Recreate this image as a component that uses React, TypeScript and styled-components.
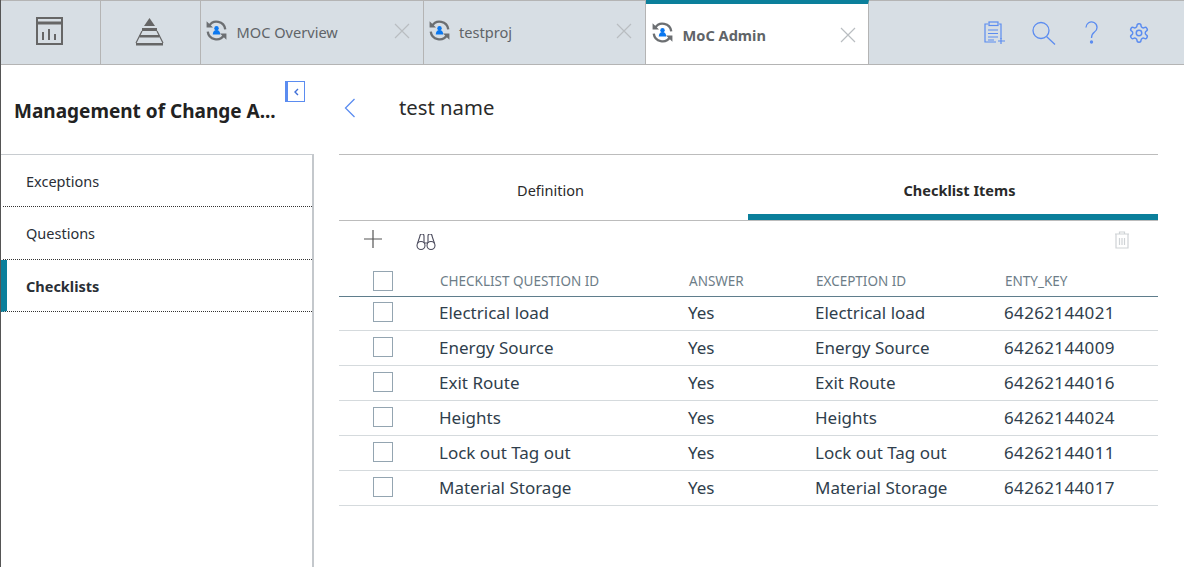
import { createGlobalStyle, styled } from 'styled-components'

const GlobalStyle = createGlobalStyle`
  html, body {
    margin: 0;
    padding: 0;
    background: #fff;
    font-family: "Noto Sans", "Open Sans", sans-serif;
  }
`

const Page = styled.div`
  width: 1184px;
  height: 567px;
  overflow: hidden;
  display: flex;
  flex-direction: column;
  box-sizing: border-box;
  border-left: 1px solid #555;
`

const TabBar = styled.div`
  height: 65px;
  flex: none;
  display: flex;
  box-sizing: border-box;
  border-top: 1px solid #b4b4b4;
  border-bottom: 1px solid #b4b4b4;
  background: #d7dee4;
`

const IconTab = styled.div<{ $shift: number }>`
  width: 100px;
  flex: none;
  display: flex;
  align-items: center;
  justify-content: center;
  box-sizing: border-box;
  border-right: 1px solid #b4b4b4;
  padding: 0 ${p => p.$shift}px 3px 0;
`

const Tab = styled.div<{ $active?: boolean }>`
  width: ${p => (p.$active ? '223px' : '222.5px')};
  flex: none;
  display: flex;
  align-items: center;
  box-sizing: border-box;
  padding: ${p => (p.$active ? '1px 12px 0 6px' : '0 13px 3px 5px')};
  border-right: 1px solid #b4b4b4;
  color: #606468;
  font-size: 14.6px;
  font-weight: ${p => (p.$active ? 700 : 400)};
  ${p =>
    p.$active &&
    `
    background: #fff;
    height: 64px;
    margin-bottom: -1px;
    border-top: 4px solid #0b7f9b;
    margin-top: -1px;
  `}
`

const TabIcon = styled.span<{ $active?: boolean }>`
  display: flex;
  margin-top: ${p => (p.$active ? '-5px' : '-2px')};
`

const TabLabel = styled.span<{ $active?: boolean }>`
  margin-left: 9.5px;
  padding-top: ${p => (p.$active ? '0' : '2px')};
  flex: 1;
`

const Actions = styled.div`
  margin-left: auto;
  display: flex;
  align-items: center;
  padding: 1px 21px 0 0;
`

const ActionSlot = styled.span`
  width: 48px;
  display: flex;
  justify-content: center;
`

const Body = styled.div`
  flex: 1;
  display: flex;
  min-height: 0;
`

const Sidebar = styled.div`
  width: 313px;
  flex: none;
  display: flex;
  flex-direction: column;
`

const SidebarHead = styled.div`
  height: 89px;
  flex: none;
  box-sizing: border-box;
  padding: 32px 0 0 13px;
  position: relative;
  font-size: 19px;
  line-height: 28px;
  font-weight: 700;
  color: #222;
  white-space: nowrap;
`

const Collapse = styled.button`
  position: absolute;
  left: 284px;
  top: 16px;
  width: 20px;
  height: 21px;
  padding: 0;
  display: flex;
  align-items: center;
  justify-content: center;
  background: #fff;
  border: 1px solid #5b8cf0;
  border-left-width: 3px;
  box-sizing: border-box;
`

const NavList = styled.div`
  flex: 1;
  border-top: 1px solid #c8ccd0;
  border-right: 2px solid #c4c8cc;
`

const NavItem = styled.div<{ $active?: boolean }>`
  height: 52.3px;
  box-sizing: border-box;
  display: flex;
  align-items: center;
  padding-left: ${p => (p.$active ? '19px' : '23px')};
  padding-top: ${p => (p.$active ? '1px' : '0')};
  border-bottom: 1px dotted #333;
  border-left: ${p => (p.$active ? '6px solid #0b7f9b' : 'none')};
  margin-left: ${p => (p.$active ? '0' : '2px')};
  font-size: 14.5px;
  font-weight: ${p => (p.$active ? 700 : 400)};
  color: #2a2f36;
`

const Main = styled.div`
  flex: 1;
  padding: 0 26px 0 25px;
  display: flex;
  flex-direction: column;
`

const TitleRow = styled.div`
  height: 90px;
  flex: none;
  box-sizing: border-box;
  display: flex;
  align-items: center;
  padding: 0 0 3px 5px;
  border-bottom: 1px solid #bcbcbc;
  font-size: 20.3px;
  color: #2b2b2b;
  gap: 43px;
`

const TitleText = styled.span`
  margin-top: -2px;
`

const Tabs = styled.div`
  display: flex;
  height: 66px;
  flex: none;
  box-sizing: border-box;
  border-bottom: 1px solid #bcbcbc;
`

const SubTab = styled.div<{ $active?: boolean }>`
  flex: ${p => (p.$active ? '1' : '0 0 409px')};
  display: flex;
  align-items: center;
  justify-content: center;
  padding: ${p => (p.$active ? '11px 0 0 13px' : '5px 0 0 14px')};
  font-size: 14.5px;
  font-weight: ${p => (p.$active ? 700 : 400)};
  color: #2a2a2a;
  box-sizing: border-box;
  ${p => p.$active && 'border-bottom: 6px solid #0b7f9b;'}
`

const Toolbar = styled.div`
  height: 44px;
  flex: none;
  display: flex;
  align-items: flex-start;
  padding: 9px 28px 0 25px;
  box-sizing: border-box;
`

const Binoculars = styled.svg`
  margin: 4px 0 0 34px;
`

const Trash = styled.svg`
  margin: 1px 0 0 auto;
`

const Row = styled.div<{ $head?: boolean }>`
  display: grid;
  grid-template-columns: 100px 249px 127px 189px 1fr;
  align-items: center;
  box-sizing: border-box;
  height: ${p => (p.$head ? '32px' : '35px')};
  margin-bottom: ${p => (p.$head ? '-1px' : '0')};
  padding-bottom: ${p => (p.$head ? '0' : '2px')};
  border-bottom: 1px solid ${p => (p.$head ? '#5f7d8c' : '#d5dadd')};
  font-size: ${p => (p.$head ? '13.5px' : '17px')};
  color: ${p => (p.$head ? '#6d7d88' : '#2f3e4c')};
`

const Cell = styled.div<{ $head?: boolean; $num?: boolean }>`
  white-space: nowrap;
  padding-left: ${p => (p.$head ? '1px' : '0')};
  letter-spacing: ${p => (p.$num ? '0.35px' : 'normal')};
`

const Check = styled.div`
  width: 20px;
  height: 20px;
  margin-left: 34px;
  box-sizing: border-box;
  border: 1px solid #94a5b1;
  background: #fff;
`

function SyncIcon() {
  return (
    <svg width="21" height="21" viewBox="3 3 18 18" fill="none">
      <path d="M5.500 8.250A7.500 7.500 0 0 1 19.500 11" stroke="#6c6f72" strokeWidth="2" />
      <path d="M18.500 15.750A7.500 7.500 0 0 1 4.500 13" stroke="#6c6f72" strokeWidth="2" />
      <path d="M3.500 4v5.500H9zM20.500 20v-5.500H15z" fill="#6c6f72" />
      <circle cx="12" cy="10" r="1.900" fill="#0b78f0" />
      <path d="M8.800 15.500c0-2.400 1.200-4 3.200-4s3.200 1.600 3.200 4z" fill="#0b78f0" />
    </svg>
  )
}

function CloseIcon() {
  return (
    <svg width="16" height="16" viewBox="0 0 16 16" stroke="#b9bdc1" strokeWidth="1.200">
      <path d="M1 1l14 14M15 1L1 15" />
    </svg>
  )
}

const rows = [
  ['Electrical load', 'Yes', 'Electrical load', '64262144021'],
  ['Energy Source', 'Yes', 'Energy Source', '64262144009'],
  ['Exit Route', 'Yes', 'Exit Route', '64262144016'],
  ['Heights', 'Yes', 'Heights', '64262144024'],
  ['Lock out Tag out', 'Yes', 'Lock out Tag out', '64262144011'],
  ['Material Storage', 'Yes', 'Material Storage', '64262144017'],
]

export default function App() {
  return (
    <Page>
      <GlobalStyle />
      <TabBar>
        <IconTab $shift={2}>
          <svg width="27" height="28" viewBox="0 0 27 28" fill="none" stroke="#666">
            <rect x="1" y="1" width="25" height="26" strokeWidth="2" />
            <path d="M1 6h25" strokeWidth="3" />
            <path d="M7 23v-8M13 23V12M19 23v-6" strokeWidth="2" />
          </svg>
        </IconTab>
        <IconTab $shift={3}>
          <svg width="29" height="29" viewBox="0 0 29 29" fill="#666">
            <path d="M14.500 1L9 9h11z" />
            <path d="M7 11h15v3H7zM4.500 18h20v2.500h-20zM1 26h27v2.500H1z" />
            <path d="M7 14L1 26M22 14l6 12" stroke="#666" strokeWidth="1.200" fill="none" />
          </svg>
        </IconTab>
        <Tab>
          <TabIcon>
            <SyncIcon />
          </TabIcon>
          <TabLabel>MOC Overview</TabLabel>
          <CloseIcon />
        </Tab>
        <Tab>
          <TabIcon>
            <SyncIcon />
          </TabIcon>
          <TabLabel>testproj</TabLabel>
          <CloseIcon />
        </Tab>
        <Tab $active>
          <TabIcon $active>
            <SyncIcon />
          </TabIcon>
          <TabLabel $active>MoC Admin</TabLabel>
          <CloseIcon />
        </Tab>
        <Actions>
          <ActionSlot>
            <svg width="22" height="24" viewBox="0 0 22 24" fill="none" stroke="#5b8cf0" strokeWidth="1.200">
              <path d="M15 3h2v15M12 21H1V3h3" />
              <rect x="5" y="1" width="9" height="3.500" />
              <path d="M4 9h10M4 12.500h10M4 16h10M4 19h6M17 17v6M14 20h7" />
            </svg>
          </ActionSlot>
          <ActionSlot>
            <svg width="25" height="24" viewBox="0 0 25 24" fill="none" stroke="#5b8cf0" strokeWidth="1.300">
              <circle cx="10" cy="9.500" r="8" />
              <path d="M15.500 15.500l8.500 8" />
            </svg>
          </ActionSlot>
          <ActionSlot>
            <svg width="15" height="24" viewBox="0 0 15 24" fill="none" stroke="#5b8cf0" strokeWidth="1.300">
              <path d="M2 6.500a5.500 5.500 0 1 1 8.500 4.500c-2 1.500-3 2.500-3 6" />
              <circle cx="7.500" cy="21" r="1" fill="#5b8cf0" />
            </svg>
          </ActionSlot>
          <ActionSlot>
            <svg width="22" height="22" viewBox="0 0 24 24" fill="none" stroke="#5b8cf0" strokeWidth="1.600">
              <path d="M12.220 2h-.44a2 2 0 0 0-2 2v.18a2 2 0 0 1-1 1.730l-.43.250a2 2 0 0 1-2 0l-.15-.08a2 2 0 0 0-2.730.73l-.22.380a2 2 0 0 0 .73 2.730l.15.100a2 2 0 0 1 1 1.720v.510a2 2 0 0 1-1 1.740l-.15.090a2 2 0 0 0-.73 2.730l.22.380a2 2 0 0 0 2.730.73l.15-.08a2 2 0 0 1 2 0l.43.250a2 2 0 0 1 1 1.730V20a2 2 0 0 0 2 2h.44a2 2 0 0 0 2-2v-.18a2 2 0 0 1 1-1.730l.43-.250a2 2 0 0 1 2 0l.15.080a2 2 0 0 0 2.730-.73l.22-.390a2 2 0 0 0-.73-2.730l-.15-.08a2 2 0 0 1-1-1.740v-.500a2 2 0 0 1 1-1.740l.15-.090a2 2 0 0 0 .73-2.730l-.22-.380a2 2 0 0 0-2.730-.73l-.15.080a2 2 0 0 1-2 0l-.43-.250a2 2 0 0 1-1-1.730V4a2 2 0 0 0-2-2z" />
              <circle cx="12" cy="12" r="3" />
            </svg>
          </ActionSlot>
        </Actions>
      </TabBar>
      <Body>
        <Sidebar>
          <SidebarHead>
            Management of Change A...
            <Collapse>
              <svg width="7" height="8" viewBox="0 0 7 8" fill="none" stroke="#3f6fd8" strokeWidth="1.400">
                <path d="M5 1L2 4l3 3" />
              </svg>
            </Collapse>
          </SidebarHead>
          <NavList>
            <NavItem>Exceptions</NavItem>
            <NavItem>Questions</NavItem>
            <NavItem $active>Checklists</NavItem>
          </NavList>
        </Sidebar>
        <Main>
          <TitleRow>
            <svg width="12" height="20" viewBox="0 0 12 20" fill="none" stroke="#5b8cf0" strokeWidth="1.300">
              <path d="M10.500 1L1.500 10l9 9" />
            </svg>
            <TitleText>test name</TitleText>
          </TitleRow>
          <Tabs>
            <SubTab>Definition</SubTab>
            <SubTab $active>Checklist Items</SubTab>
          </Tabs>
          <Toolbar>
            <svg width="18" height="18" viewBox="0 0 18 18" stroke="#555" strokeWidth="1.200">
              <path d="M9 0v18M0 9h18" />
            </svg>
            <Binoculars width="20" height="17" viewBox="0 0 20 17" fill="none" stroke="#4a4a5c" strokeWidth="1.100">
              <circle cx="5" cy="11.500" r="4" />
              <circle cx="15" cy="11.500" r="4" />
              <path d="M1.500 9.500L4 2a2 2 0 0 1 4 0v7M18.500 9.500L16 2a2 2 0 0 0-4 0v7M8 9h4" />
            </Binoculars>
            <Trash width="16" height="18" viewBox="0 0 16 18" fill="none" stroke="#cfd3d6" strokeWidth="1.200">
              <path d="M1 3h14M5.500 3V1h5v2M2 3v14h12V3M5.500 7v7M8 7v7M10.500 7v7" />
            </Trash>
          </Toolbar>
          <Row $head>
            <Check />
            <Cell $head>CHECKLIST QUESTION ID</Cell>
            <Cell $head>ANSWER</Cell>
            <Cell $head>EXCEPTION ID</Cell>
            <Cell $head>ENTY_KEY</Cell>
          </Row>
          {rows.map(r => (
            <Row key={r[3]}>
              <Check />
              {r.map((v, i) => (
                <Cell key={i} $num={i === 3}>
                  {v}
                </Cell>
              ))}
            </Row>
          ))}
        </Main>
      </Body>
    </Page>
  )
}
